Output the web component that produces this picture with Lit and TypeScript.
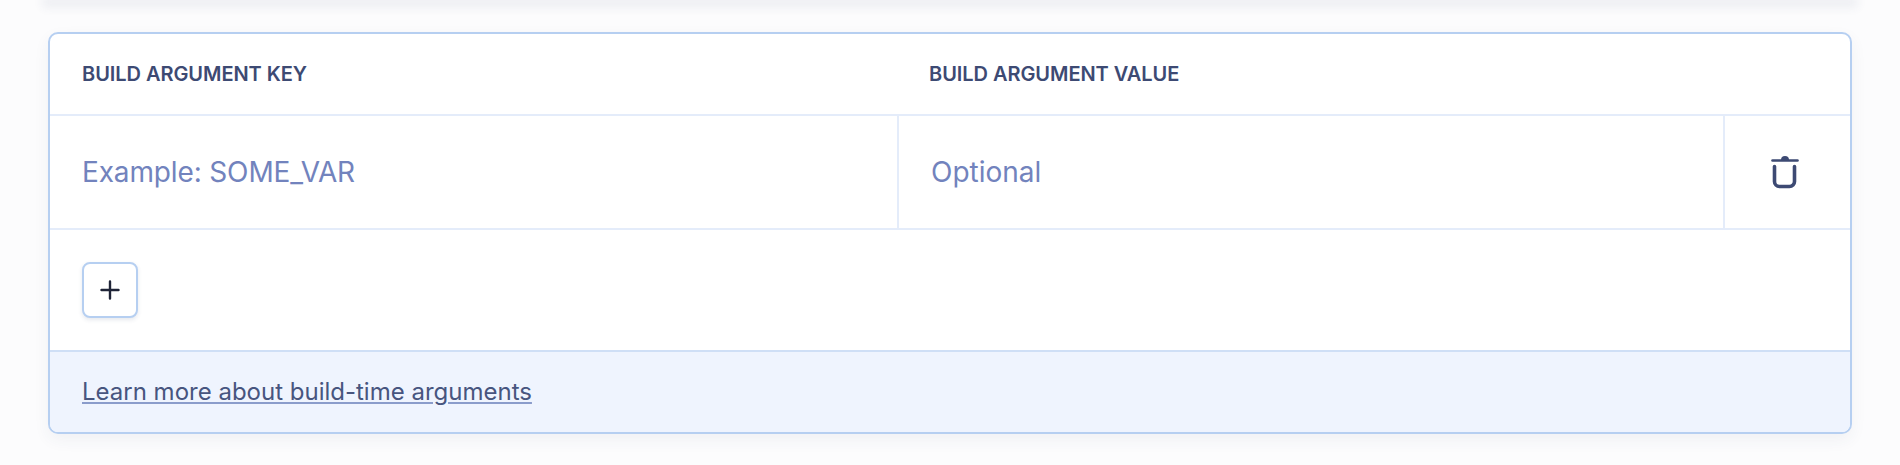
import { LitElement, html, css } from "lit";
import { customElement } from "lit/decorators.js";

@customElement("app-root")
export class AppRoot extends LitElement {
  static styles = css`
    :host {
      display: block;
      height: 465px;
      overflow: hidden;
      background: #fcfcfd;
      font-family: Inter, "Liberation Sans", sans-serif;
    }
    .top {
      height: 0;
      margin: 0 48px 32px 48px;
      box-shadow: 0 2px 10px 6px rgba(53, 64, 110, 0.07);
    }
    .card {
      margin: 0 48px;
      border: 2px solid #b6cff1;
      border-radius: 10px;
      background: #fff;
      box-shadow: 0 6px 16px rgba(53, 64, 110, 0.06);
      overflow: hidden;
    }
    .head {
      display: grid;
      grid-template-columns: 847px 1fr;
      height: 80px;
      align-items: center;
      font-size: 20px;
      font-weight: 600;
      letter-spacing: -0.05px;
      color: #3d4a73;
      text-transform: uppercase;
      border-bottom: 2px solid #e4ecfa;
    }
    .head span { padding-left: 32px; }
    .row {
      display: grid;
      grid-template-columns: 849px 826px 1fr;
      height: 112px;
      border-bottom: 2px solid #e4ecfa;
    }
    .cell {
      display: flex;
      align-items: center;
      padding-left: 32px;
      font-size: 28px;
      color: #7283bd;
      border-right: 2px solid #e4ecfa;
    }
    .key { letter-spacing: -0.14px; }
    .trash {
      display: flex;
      align-items: center;
      justify-content: center;
      padding-right: 5px;
    }
    .add { height: 120px; padding: 32px; box-sizing: border-box; }
    .btn {
      width: 56px;
      height: 56px;
      box-sizing: border-box;
      border: 2px solid #b6cff1;
      border-radius: 8px;
      background: #fff;
      box-shadow: 0 2px 4px rgba(53, 64, 110, 0.12);
      display: flex;
      align-items: center;
      justify-content: center;
    }
    .foot {
      height: 82px;
      box-sizing: border-box;
      display: flex;
      align-items: center;
      padding: 0 0 2px 32px;
      background: #eff4fe;
      border-top: 2px solid #cfdff6;
      font-size: 24px;
      color: #47557f;
    }
    .foot a {
      color: inherit;
      text-decoration: underline;
      text-decoration-color: #8a9ccb;
      text-decoration-thickness: 2px;
      text-underline-offset: 2px;
    }
  `;

  render() {
    return html`
      <div class="top"></div>
      <div class="card">
        <div class="head"><span>Build argument key</span><span>Build argument value</span></div>
        <div class="row">
          <div class="cell key">Example: SOME_VAR</div>
          <div class="cell">Optional</div>
          <div class="trash">
            <svg width="28" height="34" viewBox="0 0 28 34" fill="none" stroke="#3d4a73" stroke-width="3.6" stroke-linecap="round">
              <path d="M1.5 5.5H26.5" stroke-width="2.6"/>
              <path d="M10 5a4 4 0 0 1 8 0z" fill="#3d4a73" stroke="none"/>
              <path d="M3.5 11.5V26.5a5 5 0 0 0 5 5h10a5 5 0 0 0 5-5V11.5"/>
            </svg>
          </div>
        </div>
        <div class="add">
          <div class="btn">
            <svg width="20" height="20" viewBox="0 0 20 20" stroke="#1f2437" stroke-width="2.4" stroke-linecap="round">
              <path d="M10 1.5V18.5M1.5 10H18.5"/>
            </svg>
          </div>
        </div>
        <div class="foot"><a href="#">Learn more about build-time arguments</a></div>
      </div>
    `;
  }
}
